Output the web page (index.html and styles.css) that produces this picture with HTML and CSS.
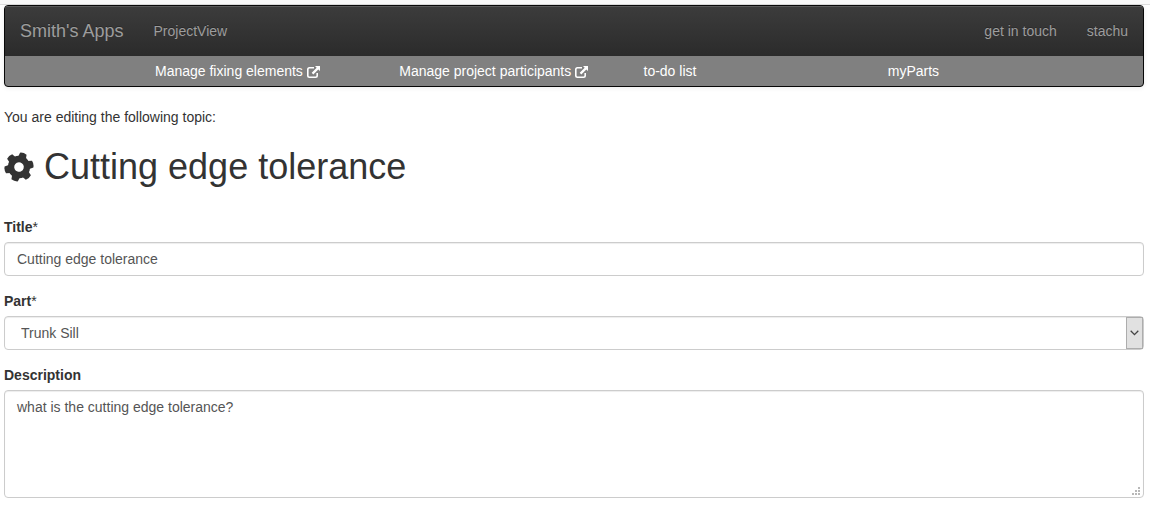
FILE: index.html
```html
<!DOCTYPE html>
<html lang="en">
<head>
<meta charset="utf-8">
<meta name="viewport" content="width=device-width, initial-scale=1">
<title>Smith's Apps</title>
<link rel="stylesheet" href="styles.css">
</head>
<body>
<svg class="symbols" aria-hidden="true">
  <symbol id="external" viewBox="0 0 13 12">
    <path d="M7 1.800H2.500Q.8 1.800 .8 3.500V9.500Q.8 11.200 2.500 11.200H8.500Q10.200 11.200 10.200 9.500V7" fill="none" stroke="currentColor" stroke-width="1.600"/>
    <path d="M8 0H13V5L11.300 3.400L6.300 8.400L4.700 6.800L9.700 1.800Z" fill="currentColor"/>
  </symbol>
</svg>
<div class="page">
  <nav class="navbar">
    <div class="navbar-main">
      <a class="brand" href="#">Smith's Apps</a>
      <a class="nav-link" href="#">ProjectView</a>
      <div class="nav-right">
        <a class="nav-link" href="#">get in touch</a>
        <a class="nav-link" href="#">stachu</a>
      </div>
    </div>
    <div class="navbar-sub">
      <a href="#">Manage fixing elements <svg class="external"><use href="#external"/></svg></a>
      <a href="#">Manage project participants <svg class="external"><use href="#external"/></svg></a>
      <a href="#">to-do list</a>
      <a href="#">myParts</a>
    </div>
  </nav>
  <main>
    <p class="intro">You are editing the following topic:</p>
    <h1 class="heading">
      <svg class="gear" viewBox="-15 -15 30 30" aria-hidden="true">
        <g fill="currentColor" transform="rotate(18)">
          <path fill-rule="evenodd" d="M0-11.200A11.200 11.200 0 1 1 0 11.200A11.200 11.200 0 1 1 0-11.200ZM0-4.800A4.800 4.800 0 1 0 0 4.800A4.800 4.800 0 1 0 0-4.800Z"/>
          <path id="tooth" d="M-4.200-9L-3.400-14Q0-15.400 3.400-14L4.200-9Z"/>
          <use href="#tooth" transform="rotate(60)"/>
          <use href="#tooth" transform="rotate(120)"/>
          <use href="#tooth" transform="rotate(180)"/>
          <use href="#tooth" transform="rotate(240)"/>
          <use href="#tooth" transform="rotate(300)"/>
        </g>
      </svg>
      <span>Cutting edge tolerance</span>
    </h1>
    <form class="form">
      <div class="field">
        <label for="title">Title<span class="required">*</span></label>
        <input class="control" id="title" type="text" value="Cutting edge tolerance">
      </div>
      <div class="field">
        <label for="part">Part<span class="required">*</span></label>
        <div class="select-wrap">
          <select class="control select" id="part"><option>Trunk Sill</option></select>
          <span class="select-button"><svg class="chevron" viewBox="0 0 9 6" aria-hidden="true"><path d="M.7 .8L4.500 4.600L8.300 .8" fill="none" stroke="currentColor" stroke-width="1.300"/></svg></span>
        </div>
      </div>
      <div class="field">
        <label for="description">Description</label>
        <div class="area-wrap">
          <textarea class="control area" id="description">what is the cutting edge tolerance?</textarea>
          <svg class="grip" viewBox="0 0 8 8" aria-hidden="true"><path d="M6 0h2v2H6zM3 3h2v2H3zM6 3h2v2H6zM0 6h2v2H0zM3 6h2v2H3zM6 6h2v2H6z" fill="currentColor"/></svg>
        </div>
      </div>
    </form>
  </main>
</div>
</body>
</html>
```
FILE: styles.css
```css
* { box-sizing: border-box; }

body {
  margin: 0;
  background: #fff;
  border-top: 4px solid #f8f8f8;
  color: #333;
  font: 14px/20px "Liberation Sans", Arial, sans-serif;
}

a { text-decoration: none; }

.symbols { display: none; }

.page {
  border-top: 1px solid #ddd;
  padding: 0 6px 12px 4px;
}

.navbar {
  border: 1px solid #080808;
  border-radius: 4px;
  overflow: hidden;
  background: #808080;
  box-shadow: 0 1px 5px rgba(0, 0, 0, .08);
}

.navbar-main {
  display: flex;
  align-items: center;
  height: 50px;
  background: linear-gradient(#3c3c3c, #2b2b2b);
  box-shadow: inset 0 1px 0 rgba(255, 255, 255, .15);
  text-shadow: 0 -1px 0 rgba(0, 0, 0, .25);
}

.brand,
.nav-link {
  padding: 0 15px;
  color: #9d9d9d;
}

.brand { font-size: 18px; }

.nav-right {
  display: flex;
  margin-left: auto;
}

.navbar-sub {
  display: grid;
  grid-template-columns: repeat(4, 1fr);
  padding: 5px 11px 5px 150px;
}

.navbar-sub a { color: #fff; }

.external {
  width: 13px;
  height: 12px;
  vertical-align: -2px;
}

.intro { margin: 20px 0; }

.heading {
  display: flex;
  align-items: center;
  gap: 10px;
  margin: 0 0 30px;
  font-size: 36px;
  font-weight: 400;
  line-height: 40px;
}

.gear {
  width: 30px;
  height: 30px;
}

.form {
  display: grid;
  gap: 15px;
}

.field {
  display: grid;
  gap: 5px;
}

.field label { font-weight: 700; }

.required { font-weight: 400; }

.control {
  display: block;
  width: 100%;
  height: 34px;
  margin: 0;
  padding: 6px 12px;
  border: 1px solid #ccc;
  border-radius: 4px;
  background: #fff;
  box-shadow: inset 0 1px 1px rgba(0, 0, 0, .075);
  color: #555;
  font: inherit;
}

.select-wrap,
.area-wrap { position: relative; }

.select {
  appearance: none;
  padding: 6px 16px;
}

.select-button {
  position: absolute;
  top: 1px;
  right: 1px;
  bottom: 1px;
  display: grid;
  place-items: center;
  width: 17px;
  border: 1px solid #adadad;
  background: #e1e1e1;
  color: #444;
  pointer-events: none;
}

.chevron {
  width: 9px;
  height: 6px;
}

.area {
  height: 108px;
  resize: none;
}

.grip {
  position: absolute;
  right: 4px;
  bottom: 3px;
  width: 8px;
  height: 8px;
  color: #b8b8b8;
  pointer-events: none;
}
```
